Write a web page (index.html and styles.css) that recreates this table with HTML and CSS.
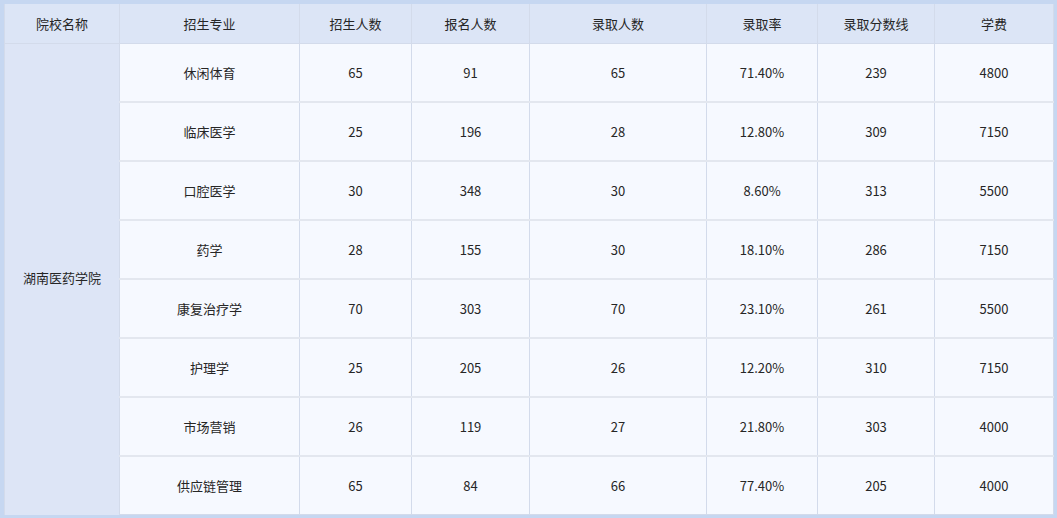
FILE: index.html
```html
<!DOCTYPE html>
<html lang="zh">
<head>
<meta charset="utf-8">
<link rel="stylesheet" href="styles.css">
</head>
<body>
<table class="admit">
  <colgroup>
    <col style="width:115px"><col style="width:180px"><col style="width:112px"><col style="width:118px"><col style="width:177px"><col style="width:111px"><col style="width:117px"><col style="width:119px">
  </colgroup>
  <thead>
    <tr><th>院校名称</th><th>招生专业</th><th>招生人数</th><th>报名人数</th><th>录取人数</th><th>录取率</th><th>录取分数线</th><th>学费</th></tr>
  </thead>
  <tbody>
    <tr><td class="school" rowspan="8">湖南医药学院</td><td>休闲体育</td><td>65</td><td>91</td><td>65</td><td>71.40%</td><td>239</td><td>4800</td></tr>
    <tr><td>临床医学</td><td>25</td><td>196</td><td>28</td><td>12.80%</td><td>309</td><td>7150</td></tr>
    <tr><td>口腔医学</td><td>30</td><td>348</td><td>30</td><td>8.60%</td><td>313</td><td>5500</td></tr>
    <tr><td>药学</td><td>28</td><td>155</td><td>30</td><td>18.10%</td><td>286</td><td>7150</td></tr>
    <tr><td>康复治疗学</td><td>70</td><td>303</td><td>70</td><td>23.10%</td><td>261</td><td>5500</td></tr>
    <tr><td>护理学</td><td>25</td><td>205</td><td>26</td><td>12.20%</td><td>310</td><td>7150</td></tr>
    <tr><td>市场营销</td><td>26</td><td>119</td><td>27</td><td>21.80%</td><td>303</td><td>4000</td></tr>
    <tr><td>供应链管理</td><td>65</td><td>84</td><td>66</td><td>77.40%</td><td>205</td><td>4000</td></tr>
  </tbody>
</table>
</body>
</html>
```
FILE: styles.css
```css
html, body {
  margin: 0;
  padding: 0;
  background: #c6d7f1;
}
body {
  padding: 4px;
  font-family: "Noto Sans CJK SC", "Noto Sans", sans-serif;
  font-size: 13px;
  color: #262626;
}
.admit {
  width: 1049px;
  border-collapse: collapse;
  table-layout: fixed;
  background: #f6f9ff;
}
.admit th, .admit td {
  text-align: center;
  vertical-align: middle;
  padding: 0 0 1px;
  border-left: 1px solid #d3dbeb;
  border-right: 1px solid #d3dbeb;
}
.admit th {
  height: 38px;
  background: #dce5f6;
  font-weight: normal;
  border-bottom: 1px solid #d3dbeb;
}
.admit td {
  height: 56px;
  border-bottom: 2px solid #e3e7ef;
}
.admit td.school {
  background: #dde5f6;
  border-bottom: none;
  padding-bottom: 4px;
}
.admit tbody tr:last-child td {
  border-bottom: 1px solid #d3dbeb;
}
```
